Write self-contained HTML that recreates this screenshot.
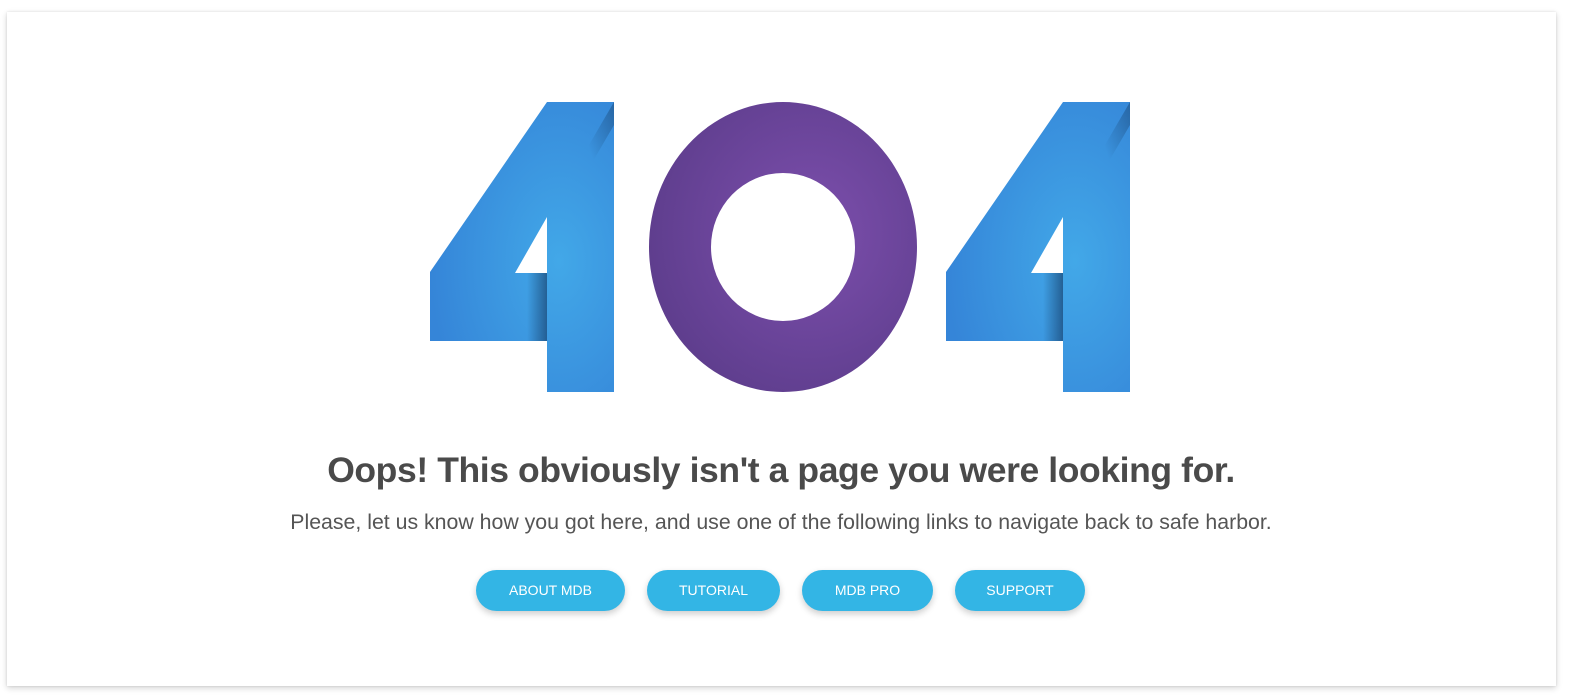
<!DOCTYPE html>
<html><head><meta charset="utf-8"><style>
body{margin:0;background:#fff;font-family:"Liberation Sans",sans-serif;width:1573px;height:700px;overflow:hidden;position:relative}
.card{position:absolute;left:7px;top:12px;width:1549px;height:674px;background:#fff;box-shadow:0 2px 6px rgba(0,0,0,.18),0 0 2px rgba(0,0,0,.1)}
h1{position:absolute;left:0;width:1562px;top:450px;margin:0;text-align:center;font-size:35.5px;font-weight:bold;color:#4a4a4a;letter-spacing:-0.4px}
p{position:absolute;left:0;width:1562px;top:510px;margin:0;text-align:center;font-size:21.3px;color:#555;font-weight:300}
.b{position:absolute;top:570px;height:41px;border-radius:21px;background:#33b5e5;color:#fff;font-size:14px;line-height:41px;text-align:center;box-shadow:0 3px 7px rgba(0,0,0,.2)}
</style></head><body>
<div class="card"></div>
<svg width="1573" height="700" style="position:absolute;left:0;top:0">
<defs>
<radialGradient id="bl" cx="0.7" cy="0.55" r="0.7"><stop offset="0" stop-color="#42a8e8"/><stop offset="1" stop-color="#3585d8"/></radialGradient>
<radialGradient id="pu" cx="0.6" cy="0.45" r="0.6"><stop offset="0" stop-color="#7d4fad"/><stop offset="1" stop-color="#5f3e8e"/></radialGradient>
<linearGradient id="sh" x1="0" x2="1"><stop offset="0" stop-color="#1d4f80" stop-opacity="0"/><stop offset="1" stop-color="#1d4f80" stop-opacity=".8"/></linearGradient>
<linearGradient id="sh2" x1="1" y1="0" x2="0.6" y2="0.3"><stop offset="0" stop-color="#1d4f80" stop-opacity=".6"/><stop offset="1" stop-color="#1d4f80" stop-opacity="0"/></linearGradient>
</defs>
<g id="f">
<path fill-rule="evenodd" fill="url(#bl)" d="M547 102H614V392H547V341H430V272ZM547 217L515 273H547Z"/>
<rect x="527" y="273" width="20" height="68" fill="url(#sh)"/>
<path d="M614 102L547 217V240L614 125Z" fill="url(#sh2)"/>
</g>
<use href="#f" x="516"/>
<path fill-rule="evenodd" fill="url(#pu)" d="M649 247a134 145 0 1 0 268 0a134 145 0 1 0 -268 0ZM711 247a72 74 0 1 0 144 0a72 74 0 1 0 -144 0Z"/>
</svg>
<h1>Oops! This obviously isn't a page you were looking for.</h1>
<p>Please, let us know how you got here, and use one of the following links to navigate back to safe harbor.</p>
<div class="b" style="left:476px;width:149px">ABOUT MDB</div>
<div class="b" style="left:647px;width:133px">TUTORIAL</div>
<div class="b" style="left:802px;width:131px">MDB PRO</div>
<div class="b" style="left:955px;width:130px">SUPPORT</div>
</body></html>
